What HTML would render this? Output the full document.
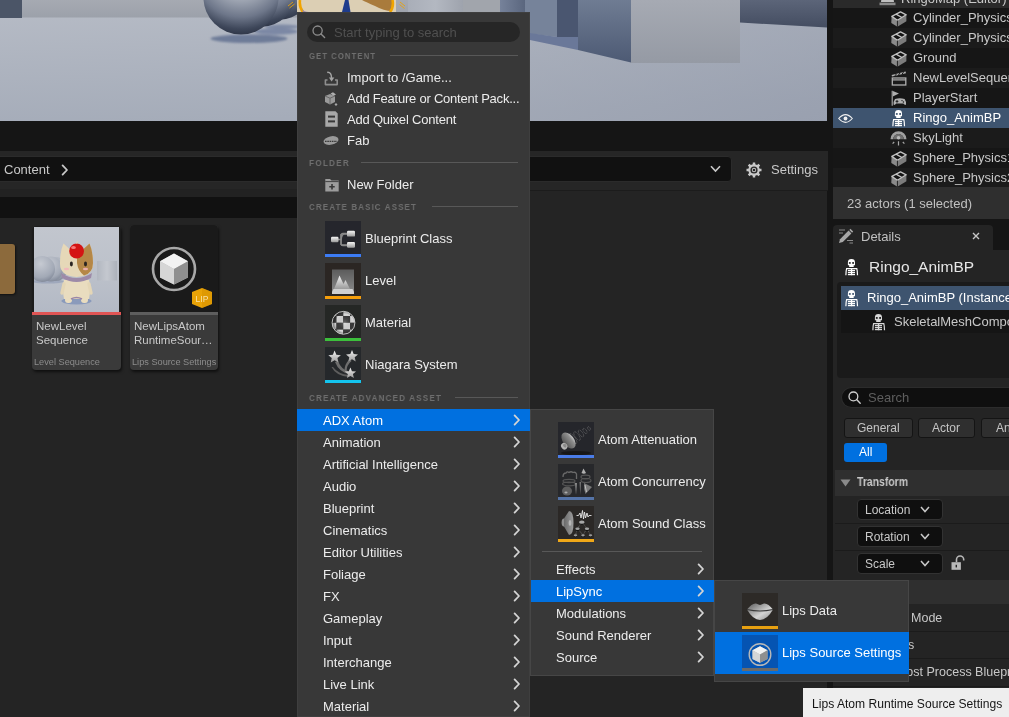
<!DOCTYPE html>
<html><head><meta charset="utf-8">
<style>
*{margin:0;padding:0;box-sizing:border-box}
html,body{width:1009px;height:717px;overflow:hidden;background:#242424;font-family:"Liberation Sans",sans-serif;position:relative}
.a{position:absolute}
.t{position:absolute;white-space:nowrap;line-height:1;will-change:transform}
.hdr{color:#6e6e6e;font-weight:bold;transform-origin:0 0}
svg{overflow:visible}
</style></head><body>
<svg class="a" style="left:0;top:0" width="827" height="121" viewBox="0 0 827 121">
<defs>
<linearGradient id="vfloor" x1="0" y1="0" x2="0.25" y2="1"><stop offset="0" stop-color="#b7bcc6"/><stop offset="1" stop-color="#a5acb9"/></linearGradient>
<linearGradient id="vwall" x1="0" y1="0" x2="0" y2="1"><stop offset="0" stop-color="#a6aab2"/><stop offset="1" stop-color="#9ca1aa"/></linearGradient>
<radialGradient id="sph" cx="0.5" cy="0.15" r="0.88"><stop offset="0" stop-color="#b8bcc5"/><stop offset="0.45" stop-color="#9ea5b2"/><stop offset="0.7" stop-color="#6e778a"/><stop offset="0.88" stop-color="#3e475a"/><stop offset="1" stop-color="#2a3142"/></radialGradient><filter id="blr" x="-20%" y="-50%" width="140%" height="200%"><feGaussianBlur stdDeviation="0.9"/></filter>
<linearGradient id="blkC" x1="0" y1="0" x2="0" y2="1"><stop offset="0" stop-color="#6f7c93"/><stop offset="1" stop-color="#4d5a74"/></linearGradient>
<linearGradient id="boxD" x1="0" y1="0" x2="0" y2="1"><stop offset="0" stop-color="#a6aab3"/><stop offset="1" stop-color="#959aa4"/></linearGradient>
<linearGradient id="wallE" x1="0" y1="0" x2="0" y2="1"><stop offset="0" stop-color="#5c6579"/><stop offset="1" stop-color="#444d61"/></linearGradient>
<linearGradient id="floorR" x1="0" y1="0" x2="1" y2="1"><stop offset="0" stop-color="#aab0bc"/><stop offset="1" stop-color="#949bab"/></linearGradient>
</defs>
<rect width="827" height="121" fill="url(#vfloor)"/>
<rect x="500" y="0" width="327" height="121" fill="url(#floorR)" opacity="0.7"/>
<rect width="520" height="17.5" fill="url(#vwall)"/>
<rect width="22" height="18" fill="#4b5567"/>
<g filter="url(#blr)"><ellipse cx="282" cy="26.8" rx="17" ry="2.2" fill="#7582a0" opacity="0.85"/>
<ellipse cx="276" cy="31.5" rx="22" ry="3.2" fill="#7380a0" opacity="0.85"/>
<ellipse cx="249" cy="38.7" rx="38.5" ry="4.3" fill="#6e7b98"/></g>
<circle cx="278" cy="-16" r="36" fill="url(#sph)"/>
<circle cx="260" cy="-10" r="37" fill="url(#sph)"/>
<circle cx="241" cy="-3" r="37.6" fill="url(#sph)"/>
<linearGradient id="col1" x1="0" y1="0" x2="1" y2="0"><stop offset="0" stop-color="#a9aeb8"/><stop offset=".5" stop-color="#b3b8c1"/><stop offset="1" stop-color="#9ea3ad"/></linearGradient>
<linearGradient id="col2" x1="0" y1="0" x2="1" y2="0"><stop offset="0" stop-color="#76829a"/><stop offset="1" stop-color="#5a667e"/></linearGradient>
<rect x="408" y="0" width="55" height="20" fill="url(#col1)"/>
<rect x="463" y="0" width="37" height="20" fill="#a1a5ac"/>
<rect x="500" y="0" width="25" height="30" fill="url(#col2)"/>
<path d="M525 0 H557 V37 L525 33 Z" fill="#76839a"/>
<path d="M530 33 L557 37 H578 V50 L530 40 Z" fill="#6a7899"/>
<path d="M557 0 H578 V37 H557 Z" fill="#4a5670"/>
<path d="M578 0 H631 V62.5 L578 50 Z" fill="url(#blkC)"/>
<path d="M631 0 H740 V63 H631 Z" fill="url(#boxD)"/>
<path d="M740 0 H827 V27.5 L740 22.5 Z" fill="url(#wallE)"/>
<!-- character head -->
<path d="M297 0 H396 V12 H297 Z" fill="#dccfb4"/>
<path d="M362 0 H392 V11 Q384 11 375 6 Q366 2 362 0 Z" fill="#a97b3c"/>
<path d="M300 0 Q299 7 303 12" fill="none" stroke="#f0a400" stroke-width="2.6"/>
<path d="M392.5 0 Q394 7 390 12" fill="none" stroke="#f0a400" stroke-width="2.6"/>
<path d="M302 9 Q304 12 309 12 H303 Z" fill="#9a86a8"/>
<path d="M345 0 H348.5 L350.5 12 H342 Z" fill="#1e3c8c"/>
<path d="M288 6 L293 2 M289.5 8 L294.5 4" stroke="#e9a30a" stroke-width="0.9"/>
<path d="M400 2 L405 6 M399.5 4.5 L404.5 8.5" stroke="#e9a30a" stroke-width="0.9"/>
</svg>
<div class="a" style="left:827px;top:0px;width:6px;height:717px;background:#151515;"></div>
<div class="a" style="left:0px;top:121px;width:828px;height:30px;background:#151515;"></div>
<div class="a" style="left:0px;top:151px;width:828px;height:39px;background:#262626;"></div>
<div class="a" style="left:-4px;top:156px;width:736px;height:26px;background:#111;border:1px solid #2b2b2b;border-radius:4px"></div>
<div class="a" style="left:0px;top:190px;width:828px;height:1px;background:#1c1c1c;"></div>
<div class="a" style="left:0px;top:189px;width:420px;height:8px;background:#222;"></div>
<div class="a" style="left:0px;top:197px;width:420px;height:21px;background:#111;"></div>
<div class="t" style="left:4px;top:163.00px;font-size:13px;color:#c8c8c8;font-weight:normal;">Content</div>
<svg class="a" style="left:61px;top:164px" width="8" height="12" viewBox="0 0 8 12"><path d="M1.6 1.4 L6 6 L1.6 10.6" fill="none" stroke="#c8c8c8" stroke-width="1.8" stroke-linecap="round" stroke-linejoin="round"/></svg>
<svg class="a" style="left:710px;top:165px" width="11" height="8" viewBox="0 0 11 8"><path d="M1 1.2 L5.5 6 L10 1.2" fill="none" stroke="#c8c8c8" stroke-width="1.6"/></svg>
<svg class="a" style="left:746px;top:162px" width="16" height="16" viewBox="0 0 16 16"><polygon points="13.66,6.73 15.50,6.79 15.50,9.21 13.66,9.27 12.94,11.03 12.90,11.11 14.16,12.45 12.45,14.16 11.11,12.90 9.35,13.64 9.27,13.66 9.21,15.50 6.79,15.50 6.73,13.66 4.97,12.94 4.89,12.90 3.55,14.16 1.84,12.45 3.10,11.11 2.36,9.35 2.34,9.27 0.50,9.21 0.50,6.79 2.34,6.73 3.06,4.97 3.10,4.89 1.84,3.55 3.55,1.84 4.89,3.10 6.65,2.36 6.73,2.34 6.79,0.50 9.21,0.50 9.27,2.34 11.03,3.06 11.11,3.10 12.45,1.84 14.16,3.55 12.90,4.89 13.64,6.65" fill="#c8c8c8"/><circle cx="8" cy="8" r="3.6" fill="#262626"/><circle cx="8" cy="8" r="2.2" fill="#c8c8c8"/><circle cx="8" cy="8" r="1.3" fill="#262626"/></svg>
<div class="t" style="left:770.5px;top:163.30px;font-size:13px;color:#c8c8c8;font-weight:normal;">Settings</div>
<div class="a" style="left:-6px;top:244px;width:21px;height:50px;background:#8c6a3c;border-radius:3px;box-shadow:1px 1px 2px #111"></div>
<div class="a" style="left:32px;top:225.5px;width:89px;height:144.5px;background:#3a3a3a;border-radius:4px;box-shadow:1px 2px 3px rgba(0,0,0,.6)"></div>
<div class="a" style="left:32px;top:225.5px;width:89px;height:87px;background:#1c1c1c;border-radius:4px 4px 0 0"></div>
<svg class="a" style="left:34px;top:227px;overflow:hidden" width="85" height="85" viewBox="0 0 85 85">
<defs>
<linearGradient id="c1bg" x1="0" y1="0" x2="0" y2="1"><stop offset="0" stop-color="#c2c6ce"/><stop offset=".55" stop-color="#bcc1ca"/><stop offset="1" stop-color="#b3b9c5"/></linearGradient>
<radialGradient id="c1s" cx=".45" cy=".3" r=".75"><stop offset="0" stop-color="#c6cad2"/><stop offset=".7" stop-color="#a2a9b6"/><stop offset="1" stop-color="#7c8494"/></radialGradient>
<linearGradient id="c1cy" x1="0" y1="0" x2="1" y2="0"><stop offset="0" stop-color="#b2b7c0"/><stop offset=".5" stop-color="#c4c8cf"/><stop offset="1" stop-color="#adb2bb"/></linearGradient>
</defs>
<rect width="85" height="85" fill="url(#c1bg)"/>
<ellipse cx="14" cy="54.5" rx="16" ry="2" fill="#8d9ab4" opacity=".6"/>
<ellipse cx="22" cy="42" rx="11" ry="12" fill="url(#c1s)"/>
<ellipse cx="17" cy="42" rx="12" ry="12.5" fill="url(#c1s)"/>
<ellipse cx="8" cy="42" rx="13" ry="13" fill="url(#c1s)"/>
<rect x="63" y="34" width="20" height="19.5" fill="url(#c1cy)"/>
<ellipse cx="42.5" cy="74" rx="15" ry="3.5" fill="#8a9abb"/>
<path d="M30 53 Q28 62 30 72 H55 Q57 62 55 53 Z" fill="#e9dcbf"/>
<path d="M30 57 L28 66 M55 57 L57 66" stroke="#e4d6b6" stroke-width="3.4" stroke-linecap="round"/>
<rect x="31" y="70" width="7" height="6" rx="3" fill="#e9dcbf"/><rect x="47" y="70" width="7" height="6" rx="3" fill="#e9dcbf"/>
<path d="M37 72 Q42.5 69 48 72" fill="none" stroke="#9a86a8" stroke-width="1.5"/>
<path d="M27 46 Q42.5 56 58 46 L57 51 Q42.5 59 28 51 Z" fill="#9d8aa8"/>
<path d="M26 36 Q25.5 49 42.5 50 Q59.5 49 59 36 Q59 24 55.5 16.5 L49.5 22 Q42.5 20 35.5 22 L29.5 16.5 Q26 24 26 36 Z" fill="#e6d8b8"/>
<path d="M43 21 Q49 21 49.5 22 L55.5 16.5 Q59 24 59 36 Q59 46 50 48.5 Q44 44 43 36 Z" fill="#b58747"/>
<ellipse cx="37.4" cy="37" rx="1.5" ry="2.4" fill="#2a2420"/><ellipse cx="51.5" cy="37" rx="1.5" ry="2.4" fill="#2a2420"/>
<ellipse cx="32.5" cy="42" rx="2.6" ry="1.2" fill="#f2b4bc" opacity=".85"/><ellipse cx="51.5" cy="42" rx="2.6" ry="1.2" fill="#f2b4bc" opacity=".85"/>
<circle cx="42.6" cy="24" r="7.4" fill="#d41414"/><ellipse cx="39.5" cy="20.5" rx="2.4" ry="1.6" fill="#ff8a8a" opacity=".85"/>
<path d="M42.6 16.6 L43.4 14.5" stroke="#e8d0a0" stroke-width="1"/>
</svg>
<div class="a" style="left:32px;top:312px;width:89px;height:3px;background:#e05555;"></div>
<div class="t" style="left:36.4px;top:321.27px;font-size:11.5px;color:#c8c8c8;font-weight:normal;">NewLevel</div>
<div class="t" style="left:36.4px;top:335.27px;font-size:11.5px;color:#c8c8c8;font-weight:normal;">Sequence</div>
<div class="t" style="left:34px;top:358.21px;font-size:9.2px;color:#8c8c8c;font-weight:normal;">Level Sequence</div>
<div class="a" style="left:130px;top:225px;width:88px;height:145px;background:#3a3a3a;border-radius:4px;box-shadow:1px 2px 3px rgba(0,0,0,.6)"></div>
<div class="a" style="left:130px;top:225px;width:88px;height:87px;background:#1a1a1a;border-radius:4px 4px 0 0"></div>
<svg class="a" style="left:130px;top:225px;overflow:hidden" width="89" height="87" viewBox="0 0 89 87">
<circle cx="44" cy="44" r="21" fill="none" stroke="#a8a8a8" stroke-width="2.6"/><path d="M44 28.5 L57.95 36.25 L57.95 52.525 L44 59.5 L30.049999999999997 52.525 L30.049999999999997 36.25 Z" fill="#bdbdbd"/><path d="M44 28.5 L57.95 36.25 L44 44 L30.049999999999997 36.25 Z" fill="#f2f2f2"/><path d="M44 44 L57.95 36.25 L57.95 52.525 L44 59.5 Z" fill="#8f8f8f"/><path d="M44 44 L30.049999999999997 36.25 L30.049999999999997 52.525 L44 59.5 Z" fill="#d6d6d6"/>
<path d="M71 67 L81 63 L91 67 V79 L81 83 L71 79 Z" transform="translate(-9 0) scale(1 1)" fill="#e9a307"/>
<path d="M72 63 L82 67 V79 L72 83 Z" fill="#d08e00" opacity=".45"/>
<text x="72" y="76.5" font-family="Liberation Sans" font-size="8.5" fill="#fff3d0" text-anchor="middle" opacity=".8">LIP</text>
</svg>
<div class="a" style="left:130px;top:312px;width:88px;height:2.5px;background:#5e5e5e;"></div>
<div class="t" style="left:134.3px;top:321.27px;font-size:11.5px;color:#c8c8c8;font-weight:normal;">NewLipsAtom</div>
<div class="t" style="left:134.3px;top:335.27px;font-size:11.5px;color:#c8c8c8;font-weight:normal;">RuntimeSour…</div>
<div class="t" style="left:132px;top:358.21px;font-size:9.2px;color:#8c8c8c;font-weight:normal;">Lips Source Settings</div>
<div class="a" style="left:833px;top:0px;width:176px;height:8px;background:#2a2a2a;"></div>
<div class="t" style="left:901px;top:-8.50px;font-size:13px;color:#c8c8c8;font-weight:normal;">RingoMap (Editor)</div>
<svg class="a" style="left:879px;top:-6px" width="17" height="12" viewBox="0 0 17 12"><path d="M3 0 H14 L15 8 H2 Z" fill="#c0c0c0"/><rect x="0.5" y="8.6" width="16" height="2.6" fill="#8a8a8a"/></svg>
<div class="a" style="left:833px;top:8px;width:176px;height:180px;background:#161616;"></div>
<div class="a" style="left:833px;top:28px;width:176px;height:20px;background:#1b1b1b;"></div>
<div class="a" style="left:833px;top:68px;width:176px;height:20px;background:#1b1b1b;"></div>
<div class="a" style="left:833px;top:128px;width:176px;height:20px;background:#1b1b1b;"></div>
<div class="a" style="left:833px;top:168px;width:176px;height:20px;background:#1b1b1b;"></div>
<div class="a" style="left:833px;top:108px;width:176px;height:20px;background:#3e546f;"></div>
<div class="t" style="left:913px;top:11.20px;font-size:13px;color:#c8c8c8;font-weight:normal;">Cylinder_Physics1</div>
<svg class="a" style="left:891px;top:10.5px" width="16" height="16" viewBox="0 0 16 16"><path d="M0.6 5.4 L6.4 9.4 V15.8 L0.3 12 Z" fill="#8a8a8a"/><path d="M6.4 9.4 L15.4 3.7 V10.2 L6.4 15.8 Z" fill="#7c7c7c"/><path d="M0.8 5.4 L9.5 0.9 L15.2 3.8 L6.4 9.2 Z" fill="#141414" stroke="#c4c4c4" stroke-width="1.3" stroke-linejoin="round"/><path d="M5 3.1 L10.9 6.5" stroke="#c4c4c4" stroke-width="1.3"/><path d="M6.4 9.6 V15.8" stroke="#141414" stroke-width="0.8"/></svg>
<div class="t" style="left:913px;top:31.20px;font-size:13px;color:#c8c8c8;font-weight:normal;">Cylinder_Physics2</div>
<svg class="a" style="left:891px;top:30.5px" width="16" height="16" viewBox="0 0 16 16"><path d="M0.6 5.4 L6.4 9.4 V15.8 L0.3 12 Z" fill="#8a8a8a"/><path d="M6.4 9.4 L15.4 3.7 V10.2 L6.4 15.8 Z" fill="#7c7c7c"/><path d="M0.8 5.4 L9.5 0.9 L15.2 3.8 L6.4 9.2 Z" fill="#141414" stroke="#c4c4c4" stroke-width="1.3" stroke-linejoin="round"/><path d="M5 3.1 L10.9 6.5" stroke="#c4c4c4" stroke-width="1.3"/><path d="M6.4 9.6 V15.8" stroke="#141414" stroke-width="0.8"/></svg>
<div class="t" style="left:913px;top:51.20px;font-size:13px;color:#c8c8c8;font-weight:normal;">Ground</div>
<svg class="a" style="left:891px;top:50.5px" width="16" height="16" viewBox="0 0 16 16"><path d="M0.6 5.4 L6.4 9.4 V15.8 L0.3 12 Z" fill="#8a8a8a"/><path d="M6.4 9.4 L15.4 3.7 V10.2 L6.4 15.8 Z" fill="#7c7c7c"/><path d="M0.8 5.4 L9.5 0.9 L15.2 3.8 L6.4 9.2 Z" fill="#141414" stroke="#c4c4c4" stroke-width="1.3" stroke-linejoin="round"/><path d="M5 3.1 L10.9 6.5" stroke="#c4c4c4" stroke-width="1.3"/><path d="M6.4 9.6 V15.8" stroke="#141414" stroke-width="0.8"/></svg>
<div class="t" style="left:913px;top:71.20px;font-size:13px;color:#c8c8c8;font-weight:normal;">NewLevelSequence</div>
<svg class="a" style="left:891px;top:70px" width="16" height="16" viewBox="0 0 16 16"><rect x="1.3" y="8" width="13.5" height="7" fill="none" stroke="#b0b0b0" stroke-width="1.3"/><rect x="1.3" y="9.3" width="13.5" height="1.2" fill="#b0b0b0"/><path d="M1 6.6 L15 3.2 L14.6 1.6 L0.6 5 Z" fill="#b0b0b0"/><path d="M4 5.8 L5.5 3.8 M7.5 5 L9 3 M11 4.2 L12.5 2.2" stroke="#161616" stroke-width="1"/></svg>
<div class="t" style="left:913px;top:91.20px;font-size:13px;color:#c8c8c8;font-weight:normal;">PlayerStart</div>
<svg class="a" style="left:891px;top:90px" width="16" height="16" viewBox="0 0 16 16"><path d="M1.2 0.8 V15.8" stroke="#b0b0b0" stroke-width="1.1"/><path d="M1.8 1 L8 3.5 L1.8 6.4 Z" fill="#b0b0b0"/><path d="M4 9 Q8.8 7.6 13.6 9 Q15.6 12 15 14.6 Q14 15.6 12.4 13.6 H5.2 Q3.6 15.6 2.6 14.6 Q2 12 4 9 Z" fill="#b0b0b0"/><path d="M4.6 11.4 H7.4 M6 10 V12.8" stroke="#161616" stroke-width="0.9"/><circle cx="11" cy="10.6" r="0.7" fill="#161616"/><circle cx="12.4" cy="12" r="0.7" fill="#161616"/></svg>
<div class="t" style="left:913px;top:111.20px;font-size:13px;color:#ffffff;font-weight:normal;">Ringo_AnimBP</div>
<svg class="a" style="left:892px;top:109.8px" width="14.0" height="16.5" viewBox="0 0 14 16.5"><path d="M2.9 3.4 Q2.9 0 6.45 0 Q10 0 10 3.4 V6.3 H8.7 V8.1 H4.2 V6.3 H2.9 Z" fill="#ffffff"/><rect x="3.9" y="3.1" width="1.8" height="1.7" fill="#3e546f"/><rect x="7.2" y="3.1" width="1.8" height="1.7" fill="#3e546f"/><path d="M0.9 16.2 Q1 11.5 1.6 9.6 H11.8 Q12.4 11.5 12.5 16.2" fill="none" stroke="#ffffff" stroke-width="1.2"/><rect x="2.9" y="10.9" width="7.1" height="1.3" fill="#ffffff"/><rect x="2.9" y="12.9" width="7.1" height="1.3" fill="#ffffff"/><rect x="2.9" y="14.9" width="7.1" height="1.3" fill="#ffffff"/><rect x="5.9" y="9.2" width="1.3" height="7" fill="#ffffff"/></svg>
<div class="t" style="left:913px;top:131.20px;font-size:13px;color:#c8c8c8;font-weight:normal;">SkyLight</div>
<svg class="a" style="left:890px;top:130px" width="17" height="16" viewBox="0 0 17 16"><path d="M0.5 9.2 A8 8 0 0 1 16.5 9.2 L13.8 9.2 A5.3 5.3 0 0 0 3.2 9.2 Z" fill="#a0a0a0"/><path d="M3.2 9.2 A5.3 5.3 0 0 1 13.8 9.2 Z" fill="#707070"/><circle cx="8.5" cy="7.8" r="1.8" fill="#b8b8b8"/><path d="M8.5 11.2 V15.6 M4.2 12 L2.6 13.6 M12.8 12 L14.4 13.6" stroke="#a8a8a8" stroke-width="1.2"/></svg>
<div class="t" style="left:913px;top:151.20px;font-size:13px;color:#c8c8c8;font-weight:normal;">Sphere_Physics1</div>
<svg class="a" style="left:891px;top:150.5px" width="16" height="16" viewBox="0 0 16 16"><path d="M0.6 5.4 L6.4 9.4 V15.8 L0.3 12 Z" fill="#8a8a8a"/><path d="M6.4 9.4 L15.4 3.7 V10.2 L6.4 15.8 Z" fill="#7c7c7c"/><path d="M0.8 5.4 L9.5 0.9 L15.2 3.8 L6.4 9.2 Z" fill="#141414" stroke="#c4c4c4" stroke-width="1.3" stroke-linejoin="round"/><path d="M5 3.1 L10.9 6.5" stroke="#c4c4c4" stroke-width="1.3"/><path d="M6.4 9.6 V15.8" stroke="#141414" stroke-width="0.8"/></svg>
<div class="t" style="left:913px;top:171.20px;font-size:13px;color:#c8c8c8;font-weight:normal;">Sphere_Physics2</div>
<svg class="a" style="left:891px;top:170.5px" width="16" height="16" viewBox="0 0 16 16"><path d="M0.6 5.4 L6.4 9.4 V15.8 L0.3 12 Z" fill="#8a8a8a"/><path d="M6.4 9.4 L15.4 3.7 V10.2 L6.4 15.8 Z" fill="#7c7c7c"/><path d="M0.8 5.4 L9.5 0.9 L15.2 3.8 L6.4 9.2 Z" fill="#141414" stroke="#c4c4c4" stroke-width="1.3" stroke-linejoin="round"/><path d="M5 3.1 L10.9 6.5" stroke="#c4c4c4" stroke-width="1.3"/><path d="M6.4 9.6 V15.8" stroke="#141414" stroke-width="0.8"/></svg>
<svg class="a" style="left:838px;top:113px" width="15" height="11" viewBox="0 0 15 11"><path d="M0.7 5.5 Q7.5 -2.3 14.3 5.5 Q7.5 13.3 0.7 5.5 Z" fill="none" stroke="#f0f0f0" stroke-width="1.1"/><circle cx="7.5" cy="5.5" r="1.9" fill="#f0f0f0"/></svg>
<div class="a" style="left:833px;top:187px;width:176px;height:32px;background:#2f2f2f;"></div>
<div class="t" style="left:847px;top:197.00px;font-size:13px;color:#c0c0c0;font-weight:normal;">23 actors (1 selected)</div>
<div class="a" style="left:833px;top:219px;width:176px;height:498px;background:#151515;"></div>
<div class="a" style="left:833px;top:225px;width:160px;height:30px;background:#242424;border-radius:4px 4px 0 0"></div>
<div class="a" style="left:833px;top:250px;width:176px;height:467px;background:#242424;"></div>
<svg class="a" style="left:838px;top:228px" width="16" height="16" viewBox="0 0 16 16"><path d="M1 15 L2 11.2 L10.6 2.6 L13.4 5.4 L4.8 14 Z" fill="#a8a8a8"/><path d="M11.3 1.9 L12.4 0.8 L15.2 3.6 L14.1 4.7 Z" fill="#a8a8a8"/><path d="M1 2 H7 M1 5 H5 M9 12.5 H15 M11.5 15 H15" stroke="#8a8a8a" stroke-width="1"/></svg>
<div class="t" style="left:860.5px;top:230.20px;font-size:13px;color:#c0c0c0;font-weight:normal;">Details</div>
<svg class="a" style="left:972px;top:232px" width="8" height="8" viewBox="0 0 8 8"><path d="M1 1 L7 7 M7 1 L1 7" stroke="#c8c8c8" stroke-width="1.4"/></svg>
<svg class="a" style="left:845px;top:258.5px" width="14.0" height="16.5" viewBox="0 0 14 16.5"><path d="M2.9 3.4 Q2.9 0 6.45 0 Q10 0 10 3.4 V6.3 H8.7 V8.1 H4.2 V6.3 H2.9 Z" fill="#ffffff"/><rect x="3.9" y="3.1" width="1.8" height="1.7" fill="#242424"/><rect x="7.2" y="3.1" width="1.8" height="1.7" fill="#242424"/><path d="M0.9 16.2 Q1 11.5 1.6 9.6 H11.8 Q12.4 11.5 12.5 16.2" fill="none" stroke="#ffffff" stroke-width="1.2"/><rect x="2.9" y="10.9" width="7.1" height="1.3" fill="#ffffff"/><rect x="2.9" y="12.9" width="7.1" height="1.3" fill="#ffffff"/><rect x="2.9" y="14.9" width="7.1" height="1.3" fill="#ffffff"/><rect x="5.9" y="9.2" width="1.3" height="7" fill="#ffffff"/></svg>
<div class="t" style="left:869.4px;top:259.18px;font-size:15.5px;color:#e6e6e6;font-weight:normal;">Ringo_AnimBP</div>
<div class="a" style="left:837px;top:282px;width:172px;height:96px;background:#1a1a1a;border-radius:4px 0 0 4px"></div>
<div class="a" style="left:841px;top:286px;width:168px;height:24px;background:#3e546f;"></div>
<div class="a" style="left:841px;top:310px;width:168px;height:23px;background:#151515;"></div>
<svg class="a" style="left:845px;top:289.5px" width="14.0" height="16.5" viewBox="0 0 14 16.5"><path d="M2.9 3.4 Q2.9 0 6.45 0 Q10 0 10 3.4 V6.3 H8.7 V8.1 H4.2 V6.3 H2.9 Z" fill="#ffffff"/><rect x="3.9" y="3.1" width="1.8" height="1.7" fill="#3e546f"/><rect x="7.2" y="3.1" width="1.8" height="1.7" fill="#3e546f"/><path d="M0.9 16.2 Q1 11.5 1.6 9.6 H11.8 Q12.4 11.5 12.5 16.2" fill="none" stroke="#ffffff" stroke-width="1.2"/><rect x="2.9" y="10.9" width="7.1" height="1.3" fill="#ffffff"/><rect x="2.9" y="12.9" width="7.1" height="1.3" fill="#ffffff"/><rect x="2.9" y="14.9" width="7.1" height="1.3" fill="#ffffff"/><rect x="5.9" y="9.2" width="1.3" height="7" fill="#ffffff"/></svg>
<div class="t" style="left:867px;top:291.00px;font-size:13px;color:#ffffff;font-weight:normal;">Ringo_AnimBP (Instance)</div>
<svg class="a" style="left:871.5px;top:313.5px" width="14.0" height="16.5" viewBox="0 0 14 16.5"><path d="M2.9 3.4 Q2.9 0 6.45 0 Q10 0 10 3.4 V6.3 H8.7 V8.1 H4.2 V6.3 H2.9 Z" fill="#d8d8d8"/><rect x="3.9" y="3.1" width="1.8" height="1.7" fill="#151515"/><rect x="7.2" y="3.1" width="1.8" height="1.7" fill="#151515"/><path d="M0.9 16.2 Q1 11.5 1.6 9.6 H11.8 Q12.4 11.5 12.5 16.2" fill="none" stroke="#d8d8d8" stroke-width="1.2"/><rect x="2.9" y="10.9" width="7.1" height="1.3" fill="#d8d8d8"/><rect x="2.9" y="12.9" width="7.1" height="1.3" fill="#d8d8d8"/><rect x="2.9" y="14.9" width="7.1" height="1.3" fill="#d8d8d8"/><rect x="5.9" y="9.2" width="1.3" height="7" fill="#d8d8d8"/></svg>
<div class="t" style="left:893.5px;top:315.00px;font-size:13px;color:#c8c8c8;font-weight:normal;">SkeletalMeshComponent</div>
<div class="a" style="left:841px;top:387px;width:168px;height:21px;background:#0f0f0f;border:1px solid #2c2c2c;border-right:none;border-radius:11px 0 0 11px"></div>
<svg class="a" style="left:848px;top:391px" width="13" height="13" viewBox="0 0 13 13"><circle cx="5.4" cy="5.4" r="4.4" fill="none" stroke="#d0d0d0" stroke-width="1.3"/><path d="M8.6 8.6 L12.2 12.2" stroke="#d0d0d0" stroke-width="1.4" stroke-linecap="round"/></svg>
<div class="t" style="left:868.4px;top:390.50px;font-size:13px;color:#5e5e5e;font-weight:normal;">Search</div>
<div class="a" style="left:843.5px;top:417.5px;width:69px;height:20px;background:#2f2f2f;border:1px solid #141414;border-radius:3px"></div>
<div class="t" style="left:856.65415625px;top:421.84px;font-size:12px;color:#c4c4c4;font-weight:normal;">General</div>
<div class="a" style="left:917.7px;top:417.5px;width:57.6px;height:20px;background:#2f2f2f;border:1px solid #141414;border-radius:3px"></div>
<div class="t" style="left:932.496px;top:421.84px;font-size:12px;color:#c4c4c4;font-weight:normal;">Actor</div>
<div class="a" style="left:980.8px;top:417.5px;width:84px;height:20px;background:#2f2f2f;border:1px solid #141414;border-radius:3px"></div>
<div class="t" style="left:996.1191249999999px;top:421.84px;font-size:12px;color:#c4c4c4;font-weight:normal;">Animation</div>
<div class="a" style="left:843.7px;top:442.7px;width:43.3px;height:19.7px;background:#0070e0;border-radius:3px"></div>
<div class="t" style="left:858.6319374999999px;top:446.34px;font-size:12px;color:#ffffff;font-weight:normal;">All</div>
<div class="a" style="left:835px;top:470px;width:174px;height:26px;background:#2f2f2f;"></div>
<svg class="a" style="left:840px;top:479px" width="11" height="8" viewBox="0 0 11 8"><path d="M0.5 0.5 H10.5 L5.5 7.5 Z" fill="#8a8a8a"/></svg>
<div class="t" style="left:857px;top:476.34px;font-size:12px;color:#c8c8c8;font-weight:bold;transform:scaleX(0.87);transform-origin:0 0">Transform</div>
<div class="a" style="left:835px;top:496px;width:174px;height:81px;background:#242424;"></div>
<div class="a" style="left:835px;top:523px;width:174px;height:1px;background:#1b1b1b;"></div>
<div class="a" style="left:835px;top:550px;width:174px;height:1px;background:#1b1b1b;"></div>
<div class="a" style="left:835px;top:577px;width:174px;height:1px;background:#1b1b1b;"></div>
<div class="a" style="left:857px;top:499px;width:86px;height:21px;background:#0f0f0f;border:1px solid #323232;border-radius:4px"></div>
<div class="t" style="left:865px;top:503.84px;font-size:12px;color:#c8c8c8;font-weight:normal;">Location</div>
<svg class="a" style="left:920px;top:506px" width="10" height="7" viewBox="0 0 10 7"><path d="M1 1 L5 5.5 L9 1" fill="none" stroke="#c8c8c8" stroke-width="1.5"/></svg>
<div class="a" style="left:857px;top:526px;width:86px;height:21px;background:#0f0f0f;border:1px solid #323232;border-radius:4px"></div>
<div class="t" style="left:865px;top:530.84px;font-size:12px;color:#c8c8c8;font-weight:normal;">Rotation</div>
<svg class="a" style="left:920px;top:533px" width="10" height="7" viewBox="0 0 10 7"><path d="M1 1 L5 5.5 L9 1" fill="none" stroke="#c8c8c8" stroke-width="1.5"/></svg>
<div class="a" style="left:857px;top:553px;width:86px;height:21px;background:#0f0f0f;border:1px solid #323232;border-radius:4px"></div>
<div class="t" style="left:865px;top:557.84px;font-size:12px;color:#c8c8c8;font-weight:normal;">Scale</div>
<svg class="a" style="left:920px;top:560px" width="10" height="7" viewBox="0 0 10 7"><path d="M1 1 L5 5.5 L9 1" fill="none" stroke="#c8c8c8" stroke-width="1.5"/></svg>
<svg class="a" style="left:951px;top:555px" width="14" height="16" viewBox="0 0 14 16"><path d="M5.5 7 V4.6 A3.6 3.6 0 0 1 12.7 4.6 V5.6" fill="none" stroke="#b8b8b8" stroke-width="1.6"/><rect x="0.5" y="7.2" width="9.4" height="7.6" fill="#b8b8b8"/><rect x="4.6" y="9.8" width="1.4" height="2.6" fill="#242424"/></svg>
<div class="a" style="left:833px;top:577px;width:176px;height:3px;background:#242424;"></div>
<div class="a" style="left:833px;top:580px;width:176px;height:24px;background:#2f2f2f;"></div>
<div class="a" style="left:833px;top:604px;width:176px;height:113px;background:#242424;"></div>
<div class="a" style="left:833px;top:631px;width:176px;height:1px;background:#1b1b1b;"></div>
<div class="a" style="left:833px;top:658px;width:176px;height:1px;background:#1b1b1b;"></div>
<div class="a" style="left:833px;top:686px;width:176px;height:1px;background:#1b1b1b;"></div>
<div class="t" style="left:852.4419921875px;top:611.92px;font-size:12.5px;color:#c8c8c8;font-weight:normal;">Animation Mode</div>
<div class="t" style="left:851.2916015625px;top:638.92px;font-size:12.5px;color:#c8c8c8;font-weight:normal;">Anim Class</div>
<div class="t" style="left:898.210546875px;top:665.92px;font-size:12.5px;color:#c8c8c8;font-weight:normal;">Post Process Blueprint</div>
<div class="a" style="left:297px;top:12px;width:233px;height:705px;background:#383838;border:1px solid #3f3f3f"></div>
<div class="a" style="left:307px;top:22px;width:213px;height:20px;background:#262626;border-radius:10px"></div>
<svg class="a" style="left:312px;top:25px" width="14" height="14" viewBox="0 0 14 14"><circle cx="5.6" cy="5.6" r="4.6" fill="none" stroke="#8c8c8c" stroke-width="1.3"/><path d="M9 9 L12.6 12.6" stroke="#8c8c8c" stroke-width="1.4" stroke-linecap="round"/></svg>
<div class="t" style="left:334px;top:26.00px;font-size:13px;color:#505050;font-weight:normal;">Start typing to search</div>
<div class="t hdr" style="left:309px;top:50.97px;font-size:9.6px;letter-spacing:1.3px;transform:scaleX(0.8063)">GET CONTENT</div>
<div class="a" style="left:390px;top:55px;width:128px;height:1px;background:#585858;"></div>
<svg class="a" style="left:324px;top:71px" width="15" height="15" viewBox="0 0 15 15"><path d="M3.5 9 H1.4 V13.6 H13.2 V9 H11" fill="none" stroke="#8e8e8e" stroke-width="1.6" stroke-linejoin="round"/><path d="M3.2 1.4 Q7.6 0.8 7.6 7.4" fill="none" stroke="#a4a4a4" stroke-width="1.5"/><path d="M4.9 6.6 L7.6 10.4 L10.3 6.6 Z" fill="#a4a4a4"/></svg>
<svg class="a" style="left:324px;top:91.5px" width="15" height="15" viewBox="0 0 15 15"><path d="M1 4 L6 2 L11 4 V10 L6 12.5 L1 10 Z" fill="#9a9a9a"/><path d="M1 4 L6 6.2 L11 4 M6 6.2 V12.5" fill="none" stroke="#5a5a5a" stroke-width="0.8"/><path d="M6.5 1.5 L9 0.3 L12 2.5 L9.5 3.8 Z" fill="#b0b0b0"/><path d="M12 11 L13.5 12.5 L12 14 L10.5 12.5 Z" fill="#a8a8a8"/></svg>
<svg class="a" style="left:325px;top:110.5px" width="13" height="16" viewBox="0 0 13 16"><path d="M0.3 0.3 H10.5 L12.7 2.5 V15.7 H0.3 Z" fill="#a8a8a8"/><rect x="3" y="4.6" width="7" height="2" fill="#383838"/><rect x="3" y="9.4" width="7" height="2" fill="#383838"/></svg>
<svg class="a" style="left:323px;top:135px" width="16" height="11" viewBox="0 0 16 11"><ellipse cx="8" cy="5.5" rx="7.6" ry="4.2" transform="rotate(-12 8 5.5)" fill="#9a9a9a"/><path d="M2 6.4 H14" stroke="#383838" stroke-width="1.4" stroke-dasharray="1.6 0.7"/></svg>
<svg class="a" style="left:325px;top:178px" width="14" height="14" viewBox="0 0 14 14"><path d="M0.3 1 H5 L6.5 2.5 H13.7 V13.4 H0.3 Z" fill="#9c9c9c"/><path d="M0.3 3.6 H13.7" stroke="#383838" stroke-width="0.9"/><path d="M7 6 V11.4 M4.3 8.7 H9.7" stroke="#383838" stroke-width="1.6"/></svg>
<div class="t" style="left:347px;top:71.30px;font-size:13px;color:#ececec;font-weight:normal;">Import to /Game...</div>
<div class="t" style="left:347px;top:92.30px;font-size:13px;color:#ececec;font-weight:normal;letter-spacing:-0.23px">Add Feature or Content Pack...</div>
<div class="t" style="left:347px;top:113.20px;font-size:13px;color:#ececec;font-weight:normal;letter-spacing:-0.2px">Add Quixel Content</div>
<div class="t" style="left:347px;top:134.20px;font-size:13px;color:#ececec;font-weight:normal;">Fab</div>
<div class="t hdr" style="left:309px;top:157.87px;font-size:9.6px;letter-spacing:1.3px;transform:scaleX(0.8675)">FOLDER</div>
<div class="a" style="left:361px;top:162px;width:157px;height:1px;background:#585858;"></div>
<div class="t" style="left:347px;top:178.20px;font-size:13px;color:#ececec;font-weight:normal;">New Folder</div>
<div class="t hdr" style="left:309px;top:201.87px;font-size:9.6px;letter-spacing:1.3px;transform:scaleX(0.8371)">CREATE BASIC ASSET</div>
<div class="a" style="left:432px;top:206px;width:86px;height:1px;background:#585858;"></div>
<div class="t" style="left:365px;top:232.00px;font-size:13px;color:#ececec;font-weight:normal;">Blueprint Class</div>
<div class="t" style="left:365px;top:274.00px;font-size:13px;color:#ececec;font-weight:normal;">Level</div>
<div class="t" style="left:365px;top:316.00px;font-size:13px;color:#ececec;font-weight:normal;">Material</div>
<div class="t" style="left:365px;top:358.00px;font-size:13px;color:#ececec;font-weight:normal;">Niagara System</div>
<div class="t hdr" style="left:309px;top:392.87px;font-size:9.6px;letter-spacing:1.3px;transform:scaleX(0.8505)">CREATE ADVANCED ASSET</div>
<div class="a" style="left:455px;top:397px;width:63px;height:1px;background:#585858;"></div>
<div class="a" style="left:297px;top:409px;width:233px;height:22px;background:#0070e0;"></div>
<div class="t" style="left:323px;top:413.80px;font-size:13px;color:#ffffff;font-weight:normal;">ADX Atom</div>
<svg class="a" style="left:513px;top:414px" width="8" height="12" viewBox="0 0 8 12"><path d="M1.6 1.4 L6 6 L1.6 10.6" fill="none" stroke="#d4d4d4" stroke-width="1.8" stroke-linecap="round" stroke-linejoin="round"/></svg>
<div class="t" style="left:323px;top:435.80px;font-size:13px;color:#ececec;font-weight:normal;">Animation</div>
<svg class="a" style="left:513px;top:436px" width="8" height="12" viewBox="0 0 8 12"><path d="M1.6 1.4 L6 6 L1.6 10.6" fill="none" stroke="#d4d4d4" stroke-width="1.8" stroke-linecap="round" stroke-linejoin="round"/></svg>
<div class="t" style="left:323px;top:457.80px;font-size:13px;color:#ececec;font-weight:normal;">Artificial Intelligence</div>
<svg class="a" style="left:513px;top:458px" width="8" height="12" viewBox="0 0 8 12"><path d="M1.6 1.4 L6 6 L1.6 10.6" fill="none" stroke="#d4d4d4" stroke-width="1.8" stroke-linecap="round" stroke-linejoin="round"/></svg>
<div class="t" style="left:323px;top:479.80px;font-size:13px;color:#ececec;font-weight:normal;">Audio</div>
<svg class="a" style="left:513px;top:480px" width="8" height="12" viewBox="0 0 8 12"><path d="M1.6 1.4 L6 6 L1.6 10.6" fill="none" stroke="#d4d4d4" stroke-width="1.8" stroke-linecap="round" stroke-linejoin="round"/></svg>
<div class="t" style="left:323px;top:501.80px;font-size:13px;color:#ececec;font-weight:normal;">Blueprint</div>
<svg class="a" style="left:513px;top:502px" width="8" height="12" viewBox="0 0 8 12"><path d="M1.6 1.4 L6 6 L1.6 10.6" fill="none" stroke="#d4d4d4" stroke-width="1.8" stroke-linecap="round" stroke-linejoin="round"/></svg>
<div class="t" style="left:323px;top:523.80px;font-size:13px;color:#ececec;font-weight:normal;">Cinematics</div>
<svg class="a" style="left:513px;top:524px" width="8" height="12" viewBox="0 0 8 12"><path d="M1.6 1.4 L6 6 L1.6 10.6" fill="none" stroke="#d4d4d4" stroke-width="1.8" stroke-linecap="round" stroke-linejoin="round"/></svg>
<div class="t" style="left:323px;top:545.80px;font-size:13px;color:#ececec;font-weight:normal;">Editor Utilities</div>
<svg class="a" style="left:513px;top:546px" width="8" height="12" viewBox="0 0 8 12"><path d="M1.6 1.4 L6 6 L1.6 10.6" fill="none" stroke="#d4d4d4" stroke-width="1.8" stroke-linecap="round" stroke-linejoin="round"/></svg>
<div class="t" style="left:323px;top:567.80px;font-size:13px;color:#ececec;font-weight:normal;">Foliage</div>
<svg class="a" style="left:513px;top:568px" width="8" height="12" viewBox="0 0 8 12"><path d="M1.6 1.4 L6 6 L1.6 10.6" fill="none" stroke="#d4d4d4" stroke-width="1.8" stroke-linecap="round" stroke-linejoin="round"/></svg>
<div class="t" style="left:323px;top:589.80px;font-size:13px;color:#ececec;font-weight:normal;">FX</div>
<svg class="a" style="left:513px;top:590px" width="8" height="12" viewBox="0 0 8 12"><path d="M1.6 1.4 L6 6 L1.6 10.6" fill="none" stroke="#d4d4d4" stroke-width="1.8" stroke-linecap="round" stroke-linejoin="round"/></svg>
<div class="t" style="left:323px;top:611.80px;font-size:13px;color:#ececec;font-weight:normal;">Gameplay</div>
<svg class="a" style="left:513px;top:612px" width="8" height="12" viewBox="0 0 8 12"><path d="M1.6 1.4 L6 6 L1.6 10.6" fill="none" stroke="#d4d4d4" stroke-width="1.8" stroke-linecap="round" stroke-linejoin="round"/></svg>
<div class="t" style="left:323px;top:633.80px;font-size:13px;color:#ececec;font-weight:normal;">Input</div>
<svg class="a" style="left:513px;top:634px" width="8" height="12" viewBox="0 0 8 12"><path d="M1.6 1.4 L6 6 L1.6 10.6" fill="none" stroke="#d4d4d4" stroke-width="1.8" stroke-linecap="round" stroke-linejoin="round"/></svg>
<div class="t" style="left:323px;top:655.80px;font-size:13px;color:#ececec;font-weight:normal;">Interchange</div>
<svg class="a" style="left:513px;top:656px" width="8" height="12" viewBox="0 0 8 12"><path d="M1.6 1.4 L6 6 L1.6 10.6" fill="none" stroke="#d4d4d4" stroke-width="1.8" stroke-linecap="round" stroke-linejoin="round"/></svg>
<div class="t" style="left:323px;top:677.80px;font-size:13px;color:#ececec;font-weight:normal;">Live Link</div>
<svg class="a" style="left:513px;top:678px" width="8" height="12" viewBox="0 0 8 12"><path d="M1.6 1.4 L6 6 L1.6 10.6" fill="none" stroke="#d4d4d4" stroke-width="1.8" stroke-linecap="round" stroke-linejoin="round"/></svg>
<div class="t" style="left:323px;top:699.80px;font-size:13px;color:#ececec;font-weight:normal;">Material</div>
<svg class="a" style="left:513px;top:700px" width="8" height="12" viewBox="0 0 8 12"><path d="M1.6 1.4 L6 6 L1.6 10.6" fill="none" stroke="#d4d4d4" stroke-width="1.8" stroke-linecap="round" stroke-linejoin="round"/></svg>
<div class="a" style="left:530px;top:409px;width:184px;height:267px;background:#383838;border:1px solid #464646"></div>
<div class="t" style="left:598px;top:433.00px;font-size:13px;color:#ececec;font-weight:normal;">Atom Attenuation</div>
<div class="t" style="left:598px;top:475.00px;font-size:13px;color:#ececec;font-weight:normal;">Atom Concurrency</div>
<div class="t" style="left:598px;top:517.00px;font-size:13px;color:#ececec;font-weight:normal;">Atom Sound Class</div>
<div class="a" style="left:542px;top:551px;width:160px;height:1px;background:#585858;"></div>
<div class="a" style="left:531px;top:580px;width:183px;height:22px;background:#0070e0;"></div>
<div class="t" style="left:556px;top:563.00px;font-size:13px;color:#ececec;font-weight:normal;">Effects</div>
<svg class="a" style="left:697px;top:563px" width="8" height="12" viewBox="0 0 8 12"><path d="M1.6 1.4 L6 6 L1.6 10.6" fill="none" stroke="#d4d4d4" stroke-width="1.8" stroke-linecap="round" stroke-linejoin="round"/></svg>
<div class="t" style="left:556px;top:585.00px;font-size:13px;color:#ffffff;font-weight:normal;">LipSync</div>
<svg class="a" style="left:697px;top:585px" width="8" height="12" viewBox="0 0 8 12"><path d="M1.6 1.4 L6 6 L1.6 10.6" fill="none" stroke="#d4d4d4" stroke-width="1.8" stroke-linecap="round" stroke-linejoin="round"/></svg>
<div class="t" style="left:556px;top:607.00px;font-size:13px;color:#ececec;font-weight:normal;">Modulations</div>
<svg class="a" style="left:697px;top:607px" width="8" height="12" viewBox="0 0 8 12"><path d="M1.6 1.4 L6 6 L1.6 10.6" fill="none" stroke="#d4d4d4" stroke-width="1.8" stroke-linecap="round" stroke-linejoin="round"/></svg>
<div class="t" style="left:556px;top:629.00px;font-size:13px;color:#ececec;font-weight:normal;">Sound Renderer</div>
<svg class="a" style="left:697px;top:629px" width="8" height="12" viewBox="0 0 8 12"><path d="M1.6 1.4 L6 6 L1.6 10.6" fill="none" stroke="#d4d4d4" stroke-width="1.8" stroke-linecap="round" stroke-linejoin="round"/></svg>
<div class="t" style="left:556px;top:651.00px;font-size:13px;color:#ececec;font-weight:normal;">Source</div>
<svg class="a" style="left:697px;top:651px" width="8" height="12" viewBox="0 0 8 12"><path d="M1.6 1.4 L6 6 L1.6 10.6" fill="none" stroke="#d4d4d4" stroke-width="1.8" stroke-linecap="round" stroke-linejoin="round"/></svg>
<div class="a" style="left:714px;top:580px;width:195px;height:102px;background:#383838;border:1px solid #464646"></div>
<div class="a" style="left:715px;top:632px;width:194px;height:42px;background:#0070e0;"></div>
<div class="t" style="left:782px;top:604.00px;font-size:13px;color:#ececec;font-weight:normal;">Lips Data</div>
<div class="t" style="left:782px;top:646.00px;font-size:13px;color:#ffffff;font-weight:normal;">Lips Source Settings</div>
<div class="a" style="left:803px;top:688px;width:206px;height:29px;background:#eeeeee;"></div>
<div class="t" style="left:812px;top:698.26px;font-size:12.1px;color:#151515;font-weight:normal;">Lips Atom Runtime Source Settings</div>
<svg class="a" style="left:325px;top:221px" width="36" height="36" viewBox="0 0 36 36"><defs><linearGradient id="gw" x1="0" y1="0" x2="0" y2="1"><stop offset="0" stop-color="#f4f4f4"/><stop offset="1" stop-color="#9a9a9a"/></linearGradient><linearGradient id="gl" x1="0" y1="0" x2="1" y2="0"><stop offset="0" stop-color="#5a5a5a"/><stop offset=".6" stop-color="#d8d8d8"/><stop offset="1" stop-color="#8a8a8a"/></linearGradient><radialGradient id="gs" cx=".6" cy=".4" r=".7"><stop offset="0" stop-color="#ffffff"/><stop offset="1" stop-color="#555"/></radialGradient></defs><rect width="36" height="33" fill="#25262c"/><rect y="33" width="36" height="3" fill="#3c7cf5"/><path d="M12 18.5 H16 M16 13 V24 Q16 13 19 13 H22 M16 24 Q16 24 19 24 H22" fill="none" stroke="#8a8a8a" stroke-width="1.3"/><path d="M16 18.5 V14.5 Q16 12.5 18 12.5 H22 M16 18.5 V22.5 Q16 24.5 18 24.5 H22" fill="none" stroke="#8a8a8a" stroke-width="1.3"/><rect x="6" y="15.8" width="7.5" height="5.5" rx="1.2" fill="url(#gw)"/><rect x="22" y="9.8" width="8" height="5.8" rx="1.2" fill="url(#gw)"/><rect x="22" y="21" width="8" height="5.8" rx="1.2" fill="url(#gw)"/></svg>
<svg class="a" style="left:325px;top:263px" width="36" height="36" viewBox="0 0 36 36"><defs><linearGradient id="gw" x1="0" y1="0" x2="0" y2="1"><stop offset="0" stop-color="#f4f4f4"/><stop offset="1" stop-color="#9a9a9a"/></linearGradient><linearGradient id="gl" x1="0" y1="0" x2="1" y2="0"><stop offset="0" stop-color="#5a5a5a"/><stop offset=".6" stop-color="#d8d8d8"/><stop offset="1" stop-color="#8a8a8a"/></linearGradient><radialGradient id="gs" cx=".6" cy=".4" r=".7"><stop offset="0" stop-color="#ffffff"/><stop offset="1" stop-color="#555"/></radialGradient></defs><rect width="36" height="33" fill="#2b2623"/><rect y="33" width="36" height="3" fill="#f59e0b"/><defs><linearGradient id="glv" x1="0" y1="0" x2="0" y2="1"><stop offset="0" stop-color="#5c5c5c"/><stop offset="1" stop-color="#8c8c8c"/></linearGradient></defs><rect x="7" y="6.5" width="22" height="24" fill="url(#glv)"/><path d="M9 26 L14.5 12.5 L18.5 21 L20.5 17 L25 26 Z" fill="url(#gw)"/><path d="M7 29 L8.5 26 H27.5 L29 29 V31 H7 Z" fill="#d0d0d0"/></svg>
<svg class="a" style="left:325px;top:305px" width="36" height="36" viewBox="0 0 36 36"><defs><linearGradient id="gw" x1="0" y1="0" x2="0" y2="1"><stop offset="0" stop-color="#f4f4f4"/><stop offset="1" stop-color="#9a9a9a"/></linearGradient><linearGradient id="gl" x1="0" y1="0" x2="1" y2="0"><stop offset="0" stop-color="#5a5a5a"/><stop offset=".6" stop-color="#d8d8d8"/><stop offset="1" stop-color="#8a8a8a"/></linearGradient><radialGradient id="gs" cx=".6" cy=".4" r=".7"><stop offset="0" stop-color="#ffffff"/><stop offset="1" stop-color="#555"/></radialGradient></defs><rect width="36" height="33" fill="#252725"/><rect y="33" width="36" height="3" fill="#3cbf3c"/><defs><clipPath id="cm"><circle cx="18.5" cy="17.8" r="11.4"/></clipPath><radialGradient id="msh" cx=".55" cy=".5" r=".55"><stop offset="0" stop-color="#fff" stop-opacity=".25"/><stop offset=".7" stop-color="#000" stop-opacity="0"/><stop offset="1" stop-color="#000" stop-opacity=".55"/></radialGradient></defs><g clip-path="url(#cm)"><rect x="4.7" y="4.2" width="6.8" height="6.8" fill="#d8d8d8"/><rect x="11.5" y="4.2" width="6.8" height="6.8" fill="#3a3a3a"/><rect x="18.3" y="4.2" width="6.8" height="6.8" fill="#d8d8d8"/><rect x="25.1" y="4.2" width="6.8" height="6.8" fill="#3a3a3a"/><rect x="4.7" y="11.0" width="6.8" height="6.8" fill="#3a3a3a"/><rect x="11.5" y="11.0" width="6.8" height="6.8" fill="#d8d8d8"/><rect x="18.3" y="11.0" width="6.8" height="6.8" fill="#3a3a3a"/><rect x="25.1" y="11.0" width="6.8" height="6.8" fill="#d8d8d8"/><rect x="4.7" y="17.8" width="6.8" height="6.8" fill="#d8d8d8"/><rect x="11.5" y="17.8" width="6.8" height="6.8" fill="#3a3a3a"/><rect x="18.3" y="17.8" width="6.8" height="6.8" fill="#d8d8d8"/><rect x="25.1" y="17.8" width="6.8" height="6.8" fill="#3a3a3a"/><rect x="4.7" y="24.6" width="6.8" height="6.8" fill="#3a3a3a"/><rect x="11.5" y="24.6" width="6.8" height="6.8" fill="#d8d8d8"/><rect x="18.3" y="24.6" width="6.8" height="6.8" fill="#3a3a3a"/><rect x="25.1" y="24.6" width="6.8" height="6.8" fill="#d8d8d8"/><circle cx="18.5" cy="17.8" r="11.4" fill="url(#msh)"/></g><circle cx="18.5" cy="17.8" r="11.4" fill="none" stroke="#d0d0d0" stroke-width="0.9"/></svg>
<svg class="a" style="left:325px;top:347px" width="36" height="36" viewBox="0 0 36 36"><defs><linearGradient id="gw" x1="0" y1="0" x2="0" y2="1"><stop offset="0" stop-color="#f4f4f4"/><stop offset="1" stop-color="#9a9a9a"/></linearGradient><linearGradient id="gl" x1="0" y1="0" x2="1" y2="0"><stop offset="0" stop-color="#5a5a5a"/><stop offset=".6" stop-color="#d8d8d8"/><stop offset="1" stop-color="#8a8a8a"/></linearGradient><radialGradient id="gs" cx=".6" cy=".4" r=".7"><stop offset="0" stop-color="#ffffff"/><stop offset="1" stop-color="#555"/></radialGradient></defs><rect width="36" height="33" fill="#25282b"/><rect y="33" width="36" height="3" fill="#14c4ee"/><path d="M10 15 Q14 25 24 27 L23 24 Q16 22 13 14 Z" fill="#6e6e6e"/><path d="M25 12 Q19 17 19.5 25 L21.5 24.5 Q21.5 18 26.5 14 Z" fill="#6e6e6e"/><path d="M6.5 20 Q11 29 24 30 L24 28 Q13 27 8 20 Z" fill="#5e5e5e"/><polygon points="9.60,3.60 11.35,7.80 15.88,8.16 12.42,11.12 13.48,15.54 9.60,13.17 5.72,15.54 6.78,11.12 3.32,8.16 7.85,7.80" fill="url(#gw)"/><polygon points="27.00,3.10 28.67,7.11 32.99,7.45 29.70,10.28 30.70,14.50 27.00,12.23 23.30,14.50 24.30,10.28 21.01,7.45 25.33,7.11" fill="url(#gw)"/><polygon points="25.40,20.40 26.96,24.15 31.01,24.48 27.93,27.12 28.87,31.07 25.40,28.96 21.93,31.07 22.87,27.12 19.79,24.48 23.84,24.15" fill="url(#gw)"/></svg>
<svg class="a" style="left:558px;top:422px" width="36" height="36" viewBox="0 0 36 36"><defs><linearGradient id="gw" x1="0" y1="0" x2="0" y2="1"><stop offset="0" stop-color="#f4f4f4"/><stop offset="1" stop-color="#9a9a9a"/></linearGradient><linearGradient id="gl" x1="0" y1="0" x2="1" y2="0"><stop offset="0" stop-color="#5a5a5a"/><stop offset=".6" stop-color="#d8d8d8"/><stop offset="1" stop-color="#8a8a8a"/></linearGradient><radialGradient id="gs" cx=".6" cy=".4" r=".7"><stop offset="0" stop-color="#ffffff"/><stop offset="1" stop-color="#555"/></radialGradient></defs><rect width="36" height="33" fill="#25262b"/><rect y="33" width="36" height="3" fill="#4a7ce8"/><defs><linearGradient id="gdish" x1="0" y1="0" x2="1" y2="0"><stop offset="0" stop-color="#555"/><stop offset=".75" stop-color="#8e8e8e"/><stop offset="1" stop-color="#c8c8c8"/></linearGradient></defs><ellipse cx="18" cy="31" rx="15" ry="2" fill="#141414" opacity=".8"/><ellipse cx="15" cy="16.5" rx="2.20" ry="6" transform="rotate(-35 15 16.5)" fill="none" stroke="#777" stroke-width="0.7" stroke-dasharray="0.8 0.7"/><ellipse cx="19" cy="14.0" rx="1.95" ry="5" transform="rotate(-35 19 14.0)" fill="none" stroke="#777" stroke-width="0.7" stroke-dasharray="0.8 0.7"/><ellipse cx="23" cy="11.5" rx="1.70" ry="4" transform="rotate(-35 23 11.5)" fill="none" stroke="#777" stroke-width="0.7" stroke-dasharray="0.8 0.7"/><ellipse cx="27" cy="9.0" rx="1.45" ry="3" transform="rotate(-35 27 9.0)" fill="none" stroke="#777" stroke-width="0.7" stroke-dasharray="0.8 0.7"/><ellipse cx="31" cy="6.5" rx="1.20" ry="2" transform="rotate(-35 31 6.5)" fill="none" stroke="#777" stroke-width="0.7" stroke-dasharray="0.8 0.7"/><ellipse cx="10.5" cy="18.5" rx="5.5" ry="9.2" transform="rotate(-38 10.5 18.5)" fill="url(#gdish)"/><ellipse cx="6.2" cy="24.2" rx="3" ry="3.4" transform="rotate(-38 6.2 24.2)" fill="#b4b4b4"/><ellipse cx="6.8" cy="23.6" rx="1.6" ry="2" transform="rotate(-38 6.8 23.6)" fill="#8a8a8a"/></svg>
<svg class="a" style="left:558px;top:464px" width="36" height="36" viewBox="0 0 36 36"><defs><linearGradient id="gw" x1="0" y1="0" x2="0" y2="1"><stop offset="0" stop-color="#f4f4f4"/><stop offset="1" stop-color="#9a9a9a"/></linearGradient><linearGradient id="gl" x1="0" y1="0" x2="1" y2="0"><stop offset="0" stop-color="#5a5a5a"/><stop offset=".6" stop-color="#d8d8d8"/><stop offset="1" stop-color="#8a8a8a"/></linearGradient><radialGradient id="gs" cx=".6" cy=".4" r=".7"><stop offset="0" stop-color="#ffffff"/><stop offset="1" stop-color="#555"/></radialGradient></defs><rect width="36" height="33" fill="#27282b"/><rect y="33" width="36" height="3" fill="#5574a8"/><ellipse cx="9" cy="27" rx="5" ry="4.6" fill="#5e5e5e"/><ellipse cx="8" cy="28.5" rx="1.6" ry="1" fill="#aaa"/><path d="M5 13 Q5 9 8 9 Q9 7 11 8.5 Q13 7 15 8.5 Q17.5 7.5 18.5 10 V15" fill="none" stroke="#6a6a6a" stroke-width="1.3"/><ellipse cx="11" cy="17" rx="6" ry="1.6" fill="none" stroke="#555" stroke-width="1.2"/><ellipse cx="11" cy="20" rx="6.5" ry="1.8" fill="none" stroke="#555" stroke-width="1.2"/><path d="M17 19 L18 31 L19 19 Z" fill="#8a8a8a"/><path d="M21.5 18 L22.3 31 L23 18 Z" fill="#777"/><path d="M23.5 9 L25.5 4.5 L28 9 Q26 10.5 23.5 9 Z" fill="#b0b0b0"/><ellipse cx="27.5" cy="13" rx="4.5" ry="1.8" fill="none" stroke="#555" stroke-width="1.2"/><ellipse cx="28" cy="16.5" rx="5" ry="2" fill="none" stroke="#555" stroke-width="1.2"/><path d="M26 19 L34 23 L27.5 30 Q25.5 25 26 19 Z" fill="#7a7a7a"/><path d="M27 21 L28.5 28" stroke="#c8c8c8" stroke-width="0.9"/></svg>
<svg class="a" style="left:558px;top:506px" width="36" height="36" viewBox="0 0 36 36"><defs><linearGradient id="gw" x1="0" y1="0" x2="0" y2="1"><stop offset="0" stop-color="#f4f4f4"/><stop offset="1" stop-color="#9a9a9a"/></linearGradient><linearGradient id="gl" x1="0" y1="0" x2="1" y2="0"><stop offset="0" stop-color="#5a5a5a"/><stop offset=".6" stop-color="#d8d8d8"/><stop offset="1" stop-color="#8a8a8a"/></linearGradient><radialGradient id="gs" cx=".6" cy=".4" r=".7"><stop offset="0" stop-color="#ffffff"/><stop offset="1" stop-color="#555"/></radialGradient></defs><rect width="36" height="33" fill="#2b2826"/><rect y="33" width="36" height="3" fill="#f0a818"/><defs><linearGradient id="gspk" x1="0" y1="0" x2="1" y2="0"><stop offset="0" stop-color="#6a6a6a"/><stop offset="1" stop-color="#9e9e9e"/></linearGradient></defs><ellipse cx="6" cy="16.5" rx="2.4" ry="4" fill="#8e8e8e"/><path d="M6 12.5 L11 5 Q15.5 5 15.5 17 Q15.5 29 11 29 L6 20.5 Z" fill="url(#gspk)"/><ellipse cx="12" cy="17" rx="1.4" ry="3" fill="#b8b8b8"/><path d="M18.5 9.5 H20.5 L22 7 L23 12 L24.5 4.5 L25.5 13 L26.5 6 L27.5 12 L29 7 L30 11 L31 9.5 H33.5" fill="none" stroke="#e6e6e6" stroke-width="0.9"/><path d="M23.8 16 L19.5 22.5 M23.8 16 L29 22.5 M19.5 22.5 L17.5 29 M19.5 22.5 L25 29 M29 22.5 L25 29 M29 22.5 L32.5 29" stroke="#9a9a9a" stroke-width="0.6" stroke-dasharray="0.8 0.8"/><ellipse cx="23.8" cy="17" rx="2.8" ry="1.8" fill="#141414"/><ellipse cx="23.8" cy="16.2" rx="2.8" ry="1.6" fill="#a8a8a8"/><ellipse cx="19.5" cy="23.5" rx="2.2" ry="1.5" fill="#141414"/><ellipse cx="19.5" cy="22.7" rx="2.2" ry="1.3" fill="#a0a0a0"/><ellipse cx="29" cy="23.5" rx="2.2" ry="1.5" fill="#141414"/><ellipse cx="29" cy="22.7" rx="2.2" ry="1.3" fill="#a0a0a0"/><ellipse cx="17.5" cy="30" rx="1.8" ry="1.3" fill="#141414"/><ellipse cx="17.5" cy="29.3" rx="1.8" ry="1.1" fill="#999"/><ellipse cx="25" cy="30" rx="1.8" ry="1.3" fill="#141414"/><ellipse cx="25" cy="29.3" rx="1.8" ry="1.1" fill="#999"/><ellipse cx="32.5" cy="30" rx="1.8" ry="1.3" fill="#141414"/><ellipse cx="32.5" cy="29.3" rx="1.8" ry="1.1" fill="#999"/></svg>
<svg class="a" style="left:742px;top:593px" width="36" height="36" viewBox="0 0 36 36"><defs><linearGradient id="gw" x1="0" y1="0" x2="0" y2="1"><stop offset="0" stop-color="#f4f4f4"/><stop offset="1" stop-color="#9a9a9a"/></linearGradient><linearGradient id="gl" x1="0" y1="0" x2="1" y2="0"><stop offset="0" stop-color="#5a5a5a"/><stop offset=".6" stop-color="#d8d8d8"/><stop offset="1" stop-color="#8a8a8a"/></linearGradient><radialGradient id="gs" cx=".6" cy=".4" r=".7"><stop offset="0" stop-color="#ffffff"/><stop offset="1" stop-color="#555"/></radialGradient></defs><rect width="36" height="33" fill="#2d2a27"/><rect y="33" width="36" height="3" fill="#e8a010"/><defs><linearGradient id="glp" x1="0" y1="0" x2="1" y2="1"><stop offset="0" stop-color="#5a5a5a"/><stop offset=".6" stop-color="#d4d4d4"/><stop offset="1" stop-color="#8a8a8a"/></linearGradient></defs><path d="M5 16.5 Q10 10 14 10.5 Q17 11.5 18 12 Q19 11.5 22 10.5 Q26 10 31 16.5 Q25 27 18 27 Q11 27 5 16.5 Z" fill="url(#glp)"/><path d="M5 16.5 Q18 19.5 31 16.5" fill="none" stroke="#3a3a3a" stroke-width="1.2"/></svg>
<svg class="a" style="left:742px;top:635px" width="36" height="36" viewBox="0 0 36 36"><defs><linearGradient id="gw" x1="0" y1="0" x2="0" y2="1"><stop offset="0" stop-color="#f4f4f4"/><stop offset="1" stop-color="#9a9a9a"/></linearGradient><linearGradient id="gl" x1="0" y1="0" x2="1" y2="0"><stop offset="0" stop-color="#5a5a5a"/><stop offset=".6" stop-color="#d8d8d8"/><stop offset="1" stop-color="#8a8a8a"/></linearGradient><radialGradient id="gs" cx=".6" cy=".4" r=".7"><stop offset="0" stop-color="#ffffff"/><stop offset="1" stop-color="#555"/></radialGradient></defs><rect width="36" height="33" fill="#0554b2"/><rect y="33" width="36" height="3" fill="#6a6a6a"/><circle cx="18" cy="19.5" r="10.8" fill="none" stroke="#b8b8b8" stroke-width="1.4"/><path d="M18 11.2 L25.47 15.35 L25.47 24.065 L18 27.8 L10.53 24.065 L10.53 15.35 Z" fill="#bdbdbd"/><path d="M18 11.2 L25.47 15.35 L18 19.5 L10.53 15.35 Z" fill="#f2f2f2"/><path d="M18 19.5 L25.47 15.35 L25.47 24.065 L18 27.8 Z" fill="#8f8f8f"/><path d="M18 19.5 L10.53 15.35 L10.53 24.065 L18 27.8 Z" fill="#d6d6d6"/></svg>
</body></html>
